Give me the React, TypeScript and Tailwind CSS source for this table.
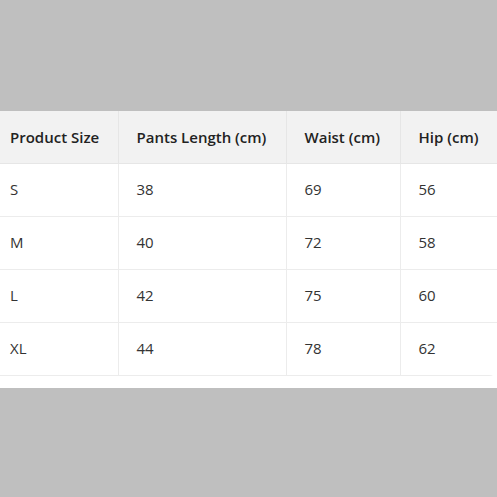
import React from 'react';

const rows = [
  ['S', '38', '69', '56'],
  ['M', '40', '72', '58'],
  ['L', '42', '75', '60'],
  ['XL', '44', '78', '62'],
];

const headers = ['Product Size', 'Pants Length (cm)', 'Waist (cm)', 'Hip (cm)'];
const widths = ['w-[126px]', 'w-[168px]', 'w-[114px]', 'w-[97px]'];

const App: React.FC = () => {
  return (
    <div className="h-[497px] w-[497px] bg-[#bfbfbf] pt-[111px] overflow-hidden font-['Open_Sans',sans-serif]">
      <div className="w-full bg-white pb-3 overflow-hidden">
        <table className="-ml-2 w-[503px] table-fixed border-collapse rounded-br-lg overflow-hidden text-[15px]">
          <colgroup>
            {widths.map((w) => (
              <col key={w} className={w} />
            ))}
          </colgroup>
          <thead>
            <tr className="h-[52px] bg-[#f2f2f2]">
              {headers.map((h, i) => (
                <th
                  key={h}
                  className={`px-[18px] text-left font-semibold text-[#222] border-b border-[#e6e6e6] ${i > 0 ? 'border-l' : ''}`}
                >
                  {h}
                </th>
              ))}
            </tr>
          </thead>
          <tbody>
            {rows.map((r, ri) => (
              <tr key={ri} className="h-[53px]">
                {r.map((c, i) => (
                  <td
                    key={i}
                    className={`px-[18px] text-[#333] border-b border-[#ececec] ${i > 0 ? 'border-l border-l-[#ececec]' : ''}`}
                  >
                    {c}
                  </td>
                ))}
              </tr>
            ))}
          </tbody>
        </table>
      </div>
    </div>
  );
};

export default App;
